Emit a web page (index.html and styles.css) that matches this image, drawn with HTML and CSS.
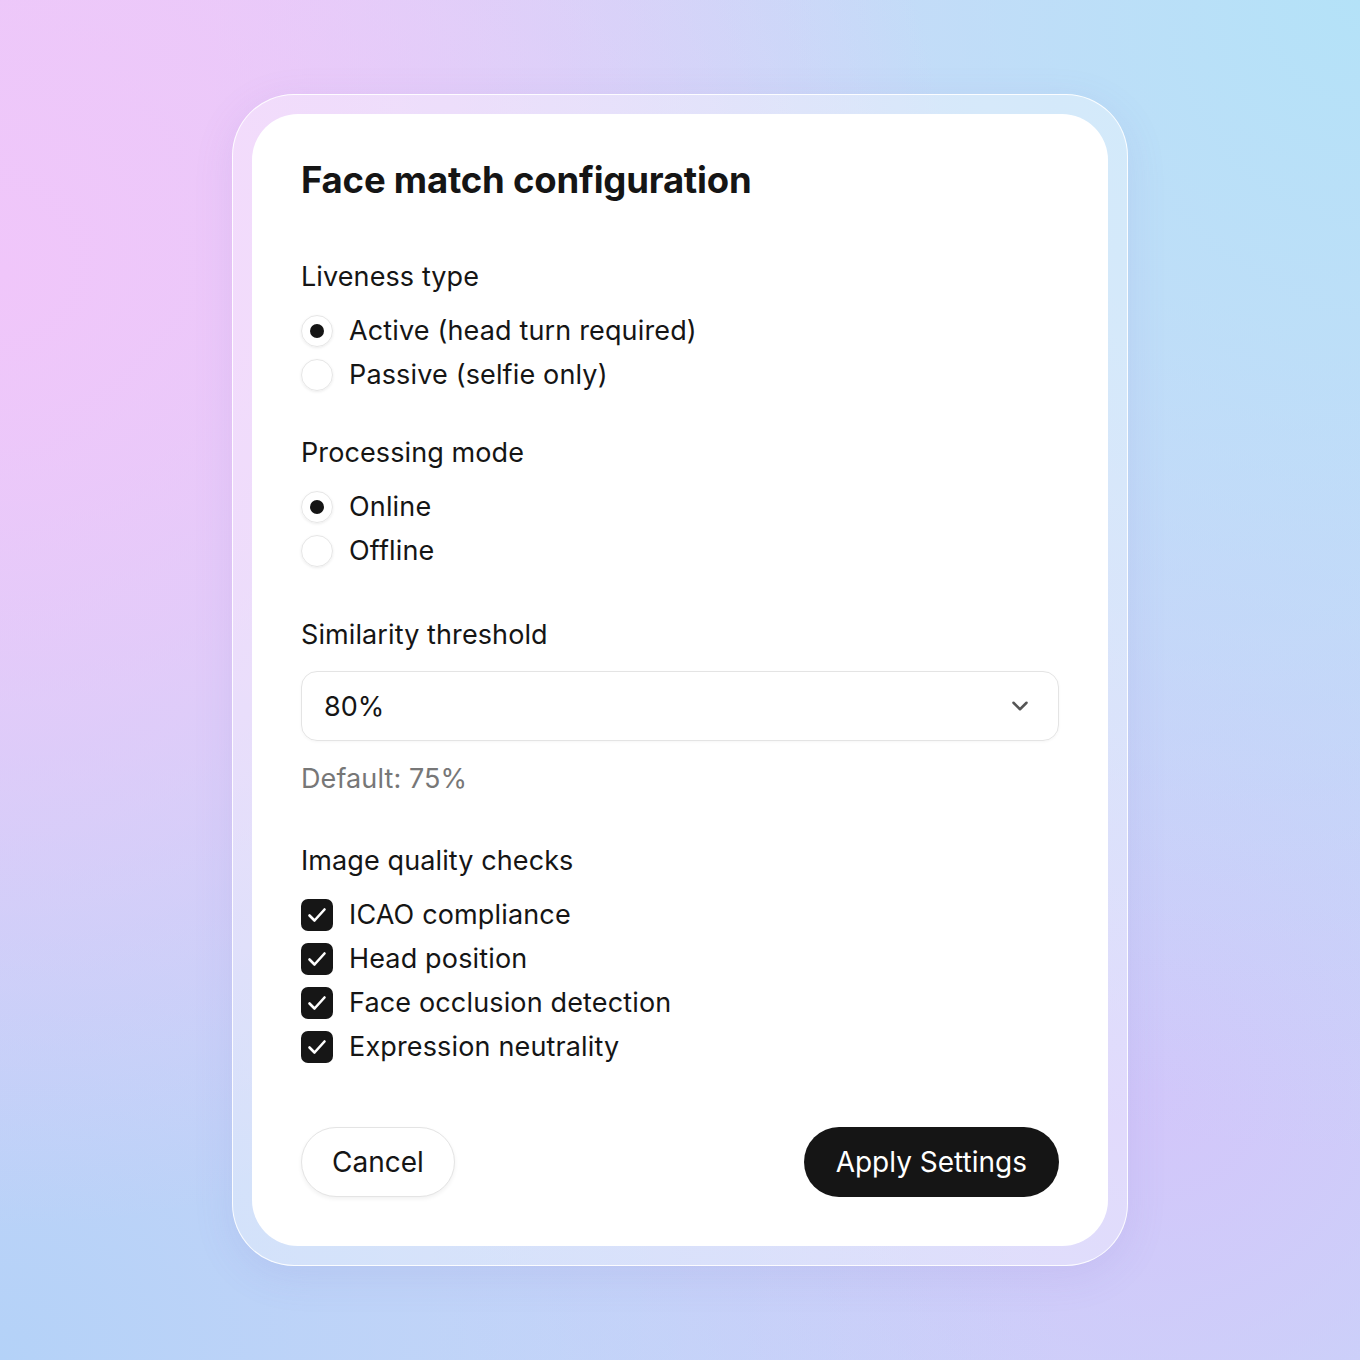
FILE: index.html
```html
<!DOCTYPE html>
<html lang="en">
<head>
    <meta charset="UTF-8">
    <meta name="viewport" content="width=device-width, initial-scale=1.0">
    <title>Face match configuration</title>
    <link rel="stylesheet" href="styles.css">
</head>
<body>

    <div class="frame">
        <div class="card">
            <h1>Face match configuration</h1>

            <div class="group">
                <div class="group-label">Liveness type</div>
                <label class="option">
                    <span class="radio checked"></span>
                    Active (head turn required)
                </label>
                <label class="option">
                    <span class="radio"></span>
                    Passive (selfie only)
                </label>
            </div>

            <div class="group">
                <div class="group-label">Processing mode</div>
                <label class="option">
                    <span class="radio checked"></span>
                    Online
                </label>
                <label class="option">
                    <span class="radio"></span>
                    Offline
                </label>
            </div>

            <div class="group group-select">
                <div class="group-label">Similarity threshold</div>
                <div class="select">
                    <span>80%</span>
                    <svg width="26" height="26" viewBox="0 0 24 24" fill="none" stroke="#555" stroke-width="2.3" stroke-linecap="round" stroke-linejoin="round">
                        <path d="M6 9l6 6 6-6"/>
                    </svg>
                </div>
                <div class="hint">Default: 75%</div>
            </div>

            <div class="group">
                <div class="group-label">Image quality checks</div>
                <label class="option check">
                    <span class="box"><svg width="32" height="32" viewBox="0 0 32 32" fill="none" stroke="#fff" stroke-width="2.6" stroke-linecap="round" stroke-linejoin="round"><path d="M8.5 16.5l5 5 10-11"/></svg></span>
                    ICAO compliance
                </label>
                <label class="option check">
                    <span class="box"><svg width="32" height="32" viewBox="0 0 32 32" fill="none" stroke="#fff" stroke-width="2.6" stroke-linecap="round" stroke-linejoin="round"><path d="M8.5 16.5l5 5 10-11"/></svg></span>
                    Head position
                </label>
                <label class="option check">
                    <span class="box"><svg width="32" height="32" viewBox="0 0 32 32" fill="none" stroke="#fff" stroke-width="2.6" stroke-linecap="round" stroke-linejoin="round"><path d="M8.5 16.5l5 5 10-11"/></svg></span>
                    Face occlusion detection
                </label>
                <label class="option check">
                    <span class="box"><svg width="32" height="32" viewBox="0 0 32 32" fill="none" stroke="#fff" stroke-width="2.6" stroke-linecap="round" stroke-linejoin="round"><path d="M8.5 16.5l5 5 10-11"/></svg></span>
                    Expression neutrality
                </label>
            </div>

            <div class="actions">
                <button class="btn btn-cancel">Cancel</button>
                <button class="btn btn-apply">Apply Settings</button>
            </div>
        </div>
    </div>

</body>
</html>
```

FILE: styles.css
```css
body {
    font-family: Inter, "Noto Sans", sans-serif;
    margin: 0;
    height: 1360px;
    display: flex;
    justify-content: center;
    align-items: center;
    color: #151515;
    background-color: #cdd4f8;
    background-image:
        radial-gradient(circle at 0% 20%, #f0c6fa 0, rgba(240, 198, 250, 0) 55%),
        radial-gradient(circle at 100% 0%, #b4e2f8 0, rgba(180, 226, 248, 0) 60%),
        radial-gradient(circle at 0% 100%, #b4d2f8 0, rgba(180, 210, 248, 0) 55%),
        radial-gradient(circle at 85% 80%, #d2c6fa 0, rgba(210, 198, 250, 0) 50%),
        linear-gradient(135deg, #e6cdf8, #c4dcf8);
}

.frame {
    width: 856px;
    padding: 19px;
    border-radius: 62px;
    background: rgba(255, 255, 255, 0.35);
    border: 1.5px solid rgba(255, 255, 255, 0.9);
    box-shadow: 0 10px 40px rgba(120, 110, 200, 0.12);
}

.card {
    background: #fff;
    border-radius: 46px;
    padding: 43px 49px 49px;
}

h1 {
    font-size: 36.5px;
    font-weight: 700;
    letter-spacing: -0.2px;
    margin: 0 0 56px;
    line-height: 46px;
}

.group {
    margin-bottom: 38px;
}

.group-label {
    font-size: 27px;
    letter-spacing: 0.1px;
    line-height: 36px;
    margin-bottom: 14px;
}

.option {
    display: flex;
    align-items: center;
    gap: 16px;
    font-size: 27px;
    letter-spacing: 0.15px;
    line-height: 44px;
    height: 44px;
}

.radio {
    width: 30px;
    height: 30px;
    border-radius: 50%;
    border: 1px solid #e6e6e6;
    box-shadow: 0 1px 3px rgba(0, 0, 0, 0.08);
    display: flex;
    justify-content: center;
    align-items: center;
    flex-shrink: 0;
}

.radio.checked::after {
    content: "";
    width: 14px;
    height: 14px;
    border-radius: 50%;
    background: #151515;
}

.box {
    width: 32px;
    height: 32px;
    border-radius: 7px;
    background: #161616;
    display: flex;
    justify-content: center;
    align-items: center;
    flex-shrink: 0;
}

.group-select {
    margin-top: 44px;
    margin-bottom: 46px;
}

.group-select .group-label {
    margin-bottom: 18px;
}

.select {
    height: 68px;
    border: 1.5px solid #e4e4e4;
    border-radius: 16px;
    display: flex;
    justify-content: space-between;
    align-items: center;
    padding: 0 25px 0 22px;
    font-size: 27px;
    box-shadow: 0 1px 3px rgba(0, 0, 0, 0.04);
}

.hint {
    font-size: 27px;
    letter-spacing: 0.1px;
    color: #777;
    margin-top: 20px;
    line-height: 36px;
}

.actions {
    display: flex;
    justify-content: space-between;
    margin-top: 58px;
}

.btn {
    font-family: Inter, "Noto Sans", sans-serif;
    font-size: 28px;
    height: 70px;
    border-radius: 35px;
    padding: 0 30px;
    cursor: pointer;
}

.btn-cancel {
    background: #fff;
    color: #151515;
    border: 1.5px solid #e4e4e4;
    box-shadow: 0 2px 4px rgba(0, 0, 0, 0.06);
}

.btn-apply {
    background: #151515;
    color: #fff;
    border: none;
    padding: 0 32px;
}
```
